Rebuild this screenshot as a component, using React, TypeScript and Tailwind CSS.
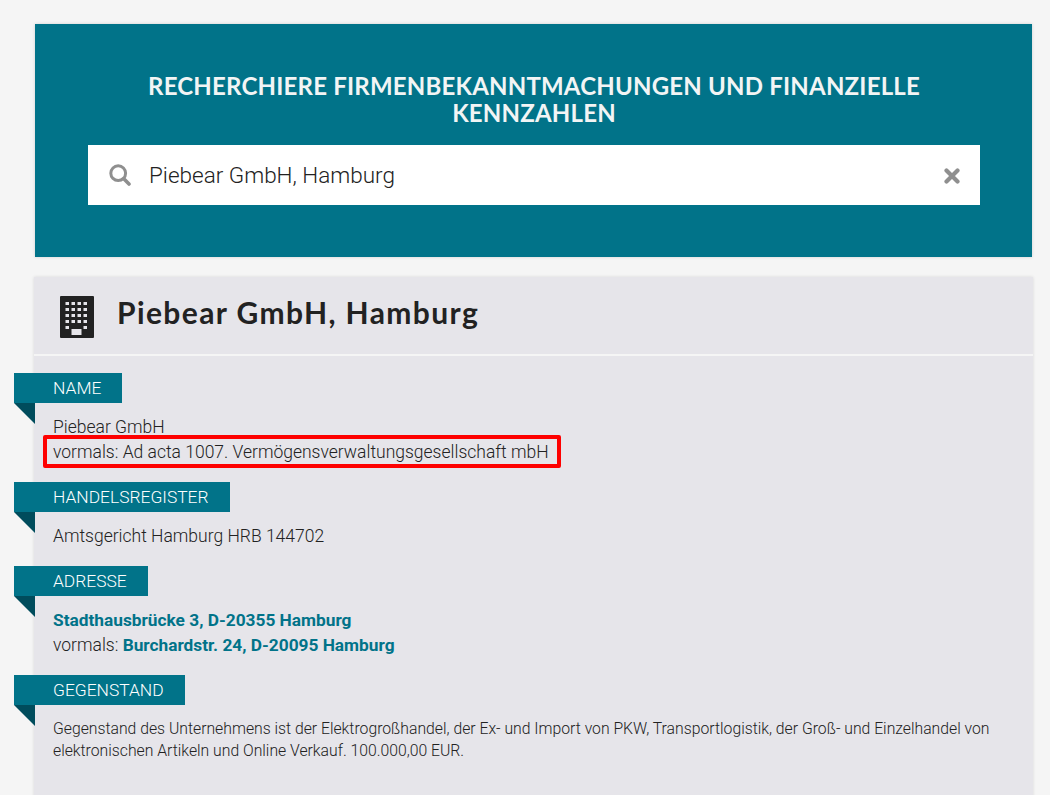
import React from 'react';

const Ribbon: React.FC<{ label: string }> = ({ label }) => (
  <div className="-ml-[39px]">
    <div className="inline-block h-[30px] bg-[#017389] pl-[39px] pr-[21px] text-[17.4px] leading-[30px] font-light text-white">
      {label}
    </div>
    <div className="h-[21px] w-[21px] bg-[#004c5c] [clip-path:polygon(0_0,100%_0,100%_100%)]" />
  </div>
);

const BuildingIcon = () => (
  <svg className="mt-[2px]" width="34" height="42" viewBox="0 0 34 42">
    <rect width="34" height="42" rx="1" fill="#222222" />
    <g fill="#e6e5ea">
      {[6, 12, 18, 24].map((y) =>
        [5.5, 11.5, 17.5, 23.5].map((x) => <rect key={`${x}-${y}`} x={x} y={y} width="3.5" height="3" />)
      )}
      <rect x="5.5" y="30" width="3.5" height="3" />
      <rect x="23.5" y="30" width="3.5" height="3" />
      <rect x="11.5" y="33" width="10" height="6" />
    </g>
  </svg>
);

const SearchIcon = () => (
  <svg width="22" height="22" viewBox="0 0 22 22" fill="none" stroke="#8f8f8f">
    <circle cx="9.2" cy="9.2" r="7.4" strokeWidth="3" />
    <path d="M14.8 14.8 20 20" strokeWidth="3.6" strokeLinecap="round" />
  </svg>
);

const ClearIcon = () => (
  <svg className="mt-[2px]" width="16" height="16" viewBox="0 0 16 16" fill="none" stroke="#8f8f8f">
    <path d="M2.5 2.5 13.5 13.5M13.5 2.5 2.5 13.5" strokeWidth="4.2" strokeLinecap="round" />
  </svg>
);

const App: React.FC = () => {
  return (
    <div className="h-[795px] overflow-hidden bg-[#f5f5f5] pt-6 font-['Roboto',sans-serif] text-[#222222]">
      {/* Search header */}
      <div className="ml-[35px] w-[997px] bg-[#017389] pt-[48px] pr-[52px] pb-[52px] pl-[53px] shadow-[0_0_3px_rgba(0,0,0,0.15)]">
        <h1 className="text-center font-['Lato',sans-serif] text-[24px] leading-[27px] font-bold tracking-[0.2px] text-[#f2f5f5] uppercase">
          Recherchiere Firmenbekanntmachungen und finanzielle Kennzahlen
        </h1>
        <div className="mt-[19px] flex h-[60px] items-center bg-white pr-[20px] pl-[21px]">
          <SearchIcon />
          <span className="ml-[18px] flex-1 pt-[2px] text-[22.5px] font-light text-[#222222]">Piebear GmbH, Hamburg</span>
          <ClearIcon />
        </div>
      </div>

      {/* Company details */}
      <div className="mt-5 ml-[34px] w-[999px] bg-[#e6e5ea] shadow-[0_0_3px_rgba(0,0,0,0.12)]">
        <div className="flex h-[79px] items-center border-b-2 border-[#f5f5f5] pl-[26px]">
          <BuildingIcon />
          <h2 className="mb-[6px] ml-[23px] font-['Lato',sans-serif] text-[30px] font-bold tracking-[1.4px] text-[#222222]">
            Piebear GmbH, Hamburg
          </h2>
        </div>

        <div className="pt-[17px] pl-[19px]">
          <Ribbon label="NAME" />
          <div className="-mt-[9px] text-[17.5px] leading-[25px] font-light">
            <div>Piebear GmbH</div>
            <div className="relative">
              vormals: Ad acta 1007. Vermögensverwaltungsgesellschaft mbH
              <span className="absolute top-[-5px] left-[-10px] h-[33px] w-[518px] rounded-[2px] border-[4px] border-[#fe0000]" />
            </div>
          </div>

          <div className="mt-[17px]">
            <Ribbon label="HANDELSREGISTER" />
          </div>
          <div className="-mt-[9px] text-[17.5px] leading-[25px] font-light">Amtsgericht Hamburg HRB 144702</div>

          <div className="mt-[17px]">
            <Ribbon label="ADRESSE" />
          </div>
          <div className="-mt-[9px] text-[17.5px] leading-[25px] font-light">
            <div className="text-[17.3px] font-bold text-[#017389]">Stadthausbrücke 3, D-20355 Hamburg</div>
            <div>
              vormals: <span className="text-[17.3px] font-bold text-[#017389]">Burchardstr. 24, D-20095 Hamburg</span>
            </div>
          </div>

          <div className="mt-[17px]">
            <Ribbon label="GEGENSTAND" />
          </div>
          <p className="-mt-[8px] w-[960px] pb-[60px] text-[15.75px] leading-[22px] font-light">
            Gegenstand des Unternehmens ist der Elektrogroßhandel, der Ex- und Import von PKW, Transportlogistik, der
            Groß- und Einzelhandel von elektronischen Artikeln und Online Verkauf. 100.000,00 EUR.
          </p>
        </div>
      </div>
    </div>
  );
};

export default App;
